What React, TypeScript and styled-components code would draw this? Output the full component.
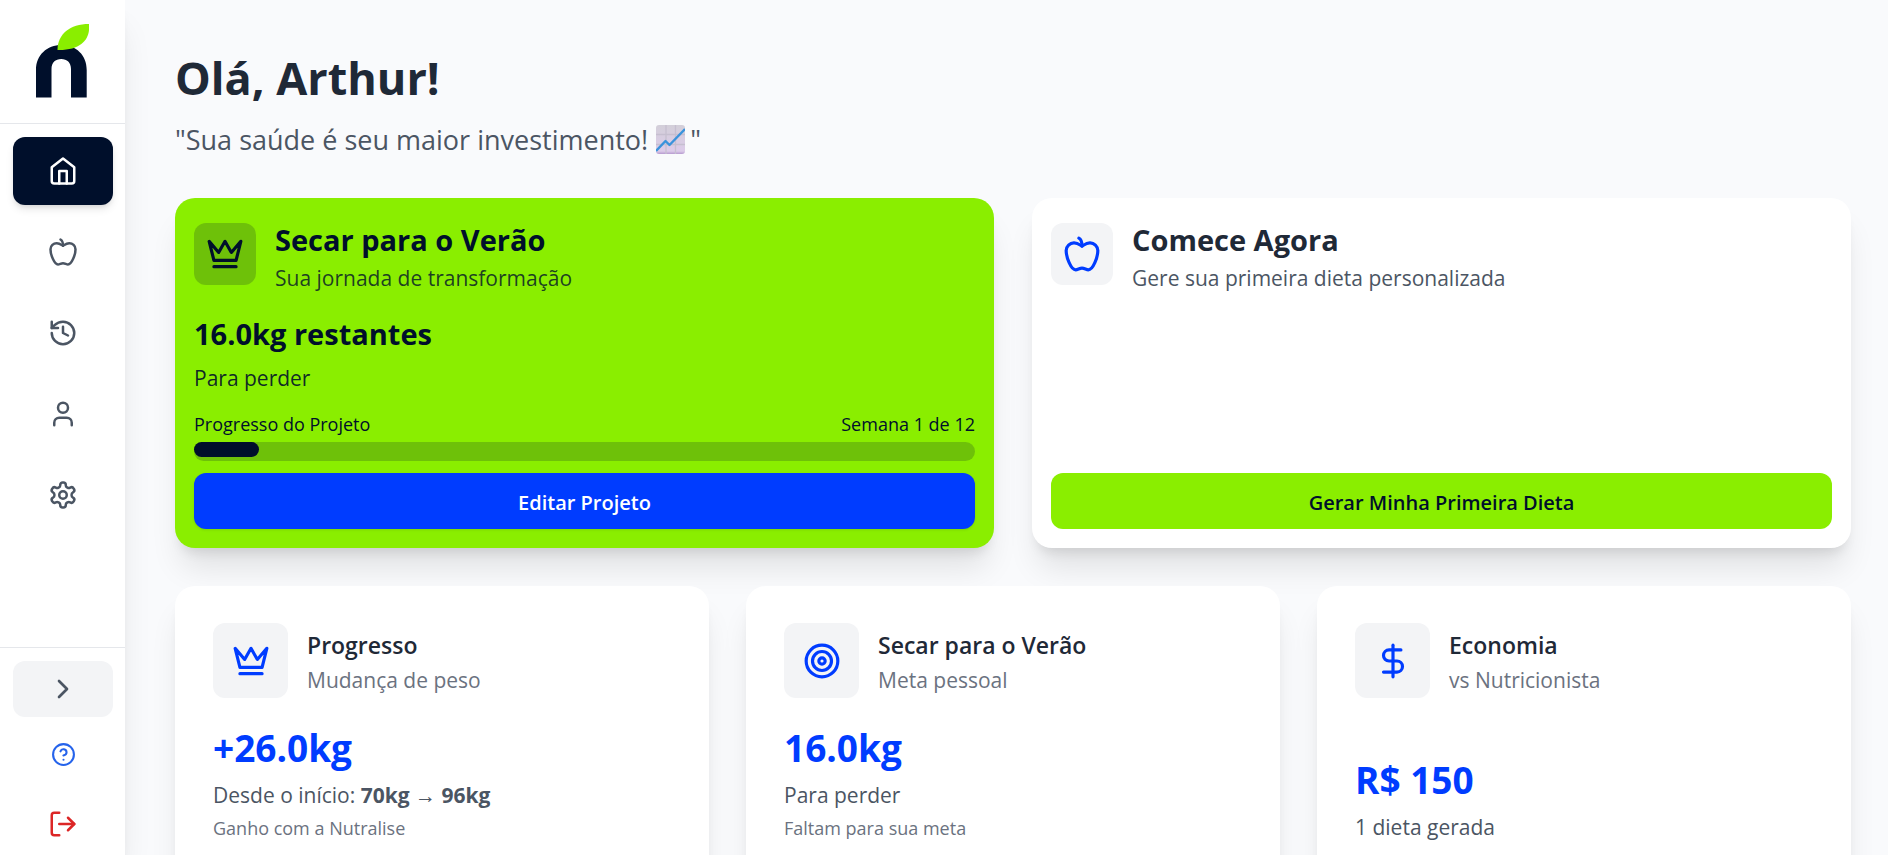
import React from "react";
import styled, { createGlobalStyle } from "styled-components";
import {
  ChevronRight,
  CircleQuestionMark,
  DollarSign,
  History,
  LogOut,
  Target,
  User,
} from "lucide-react";

const color = {
  navy: "#000f2b",
  lime: "#8aee00",
  blue: "#003cff",
  page: "#f9fafc",
  ink: "#1f2937",
  text: "#4b5563",
  muted: "#6b7280",
  tile: "#f3f4f6",
  line: "#e5e7eb",
};

const GlobalStyle = createGlobalStyle`
  *, *::before, *::after { box-sizing: border-box; }
  body {
    margin: 0;
    background: ${color.page};
    color: ${color.ink};
    font-family: "Segoe UI", "Open Sans", "Noto Sans", sans-serif;
  }
  h1, h2, h3, p { margin: 0; }
  button { font: inherit; border: 0; cursor: pointer; }
`;

const Shell = styled.div`
  display: flex;
  height: 100vh;
  overflow: hidden;
`;

const Sidebar = styled.aside`
  display: flex;
  flex-direction: column;
  flex: 0 0 125px;
  background: #fff;
  box-shadow: 0 25px 31px -6px rgba(0, 0, 0, 0.1), 0 10px 12px -6px rgba(0, 0, 0, 0.1);
  z-index: 1;
`;

const Brand = styled.a`
  display: flex;
  justify-content: center;
  padding: 24px 0 25px;
  border-bottom: 1px solid ${color.line};
`;

const Nav = styled.nav`
  display: flex;
  flex-direction: column;
  gap: 13px;
  padding: 13px 12px 13px 13px;
`;

const NavLink = styled.a<{ $active?: boolean }>`
  display: flex;
  align-items: center;
  justify-content: center;
  height: 68px;
  border-radius: 12px;
  color: ${(p) => (p.$active ? "#fff" : color.text)};
  background: ${(p) => (p.$active ? color.navy : "transparent")};
  box-shadow: ${(p) => (p.$active ? "0 5px 8px -1px rgba(0, 0, 0, 0.1), 0 3px 5px -2px rgba(0, 0, 0, 0.1)" : "none")};
`;

const SidebarFooter = styled.div`
  display: flex;
  flex-direction: column;
  gap: 10px;
  margin-top: auto;
  padding: 13px 12px 0 13px;
  border-top: 1px solid ${color.line};
`;

const FooterButton = styled.button<{ $tone: string; $filled?: boolean; $height: number }>`
  display: flex;
  align-items: center;
  justify-content: center;
  height: ${(p) => p.$height}px;
  padding: 0;
  border-radius: 12px;
  color: ${(p) => p.$tone};
  background: ${(p) => (p.$filled ? color.tile : "transparent")};
`;

const Main = styled.main`
  flex: 1;
  min-width: 0;
  padding: 50px 37px 38px 50px;
  overflow-y: auto;
  scrollbar-width: none;
`;

const Greeting = styled.h1`
  font-size: 45px;
  line-height: 56px;
  font-weight: 700;
`;

const Quote = styled.p`
  display: flex;
  align-items: center;
  margin: 13px 0 38px;
  font-size: 27px;
  line-height: 41px;
  color: ${color.text};

  svg {
    margin: 0 5px 0 8px;
  }
`;

const Grid = styled.div<{ $columns: number; $gap: number }>`
  display: grid;
  grid-template-columns: repeat(${(p) => p.$columns}, minmax(0, 1fr));
  gap: ${(p) => p.$gap}px;
  margin-bottom: 38px;
`;

const Card = styled.section<{ $accent?: boolean }>`
  display: flex;
  flex-direction: column;
  border-radius: 20px;
  background: ${(p) => (p.$accent ? color.lime : "#fff")};
  box-shadow: 0 25px 31px -6px rgba(0, 0, 0, 0.1), 0 10px 12px -6px rgba(0, 0, 0, 0.1);
`;

const FeatureCard = styled(Card)`
  min-height: 350px;
  padding: 25px 19px 19px;
  color: ${(p) => (p.$accent ? color.navy : color.ink)};
`;

const StatCard = styled(Card)`
  padding: 37px 38px;
`;

const CardHeader = styled.header<{ $align: string }>`
  display: flex;
  align-items: ${(p) => p.$align};
  gap: 19px;
`;

const IconTile = styled.div<{ $size: number; $accent?: boolean }>`
  display: flex;
  align-items: center;
  justify-content: center;
  flex: none;
  width: ${(p) => p.$size}px;
  height: ${(p) => p.$size}px;
  border-radius: 12px;
  color: ${(p) => (p.$accent ? color.navy : color.blue)};
  background: ${(p) => (p.$accent ? "rgba(0, 15, 43, 0.2)" : color.tile)};
`;

const FeatureTitle = styled.h2`
  font-size: 29px;
  line-height: 34px;
  font-weight: 700;
`;

const FeatureSubtitle = styled.p<{ $accent?: boolean }>`
  margin-top: 7px;
  font-size: 21px;
  line-height: 28px;
  color: ${(p) => (p.$accent ? "rgba(0, 15, 43, 0.8)" : color.text)};
`;

const Remaining = styled.p`
  margin-top: 23px;
  font-size: 29px;
  line-height: 38px;
  font-weight: 700;
`;

const RemainingNote = styled.p`
  margin-top: 11px;
  font-size: 21px;
  line-height: 28px;
  color: rgba(0, 15, 43, 0.9);
`;

const ProgressLabels = styled.div`
  display: flex;
  justify-content: space-between;
  margin-top: auto;
  font-size: 18px;
  line-height: 24px;
`;

const ProgressTrack = styled.div`
  height: 19px;
  margin: 6px 0 12px;
  border-radius: 10px;
  background: rgba(0, 15, 43, 0.2);
`;

const ProgressFill = styled.div`
  height: 15px;
  border-radius: 8px;
  background: ${color.navy};
`;

const ActionButton = styled.button<{ $tone: "blue" | "lime" }>`
  height: 56px;
  padding: 3px 20px 0;
  border-radius: 12px;
  font-size: 20px;
  line-height: 28px;
  font-weight: 600;
  color: ${(p) => (p.$tone === "blue" ? "#fff" : color.navy)};
  background: ${(p) => (p.$tone === "blue" ? color.blue : color.lime)};
  box-shadow: ${(p) => (p.$tone === "blue" ? "0 1px 3px rgba(0, 0, 0, 0.1)" : "none")};
`;

const CardBottom = styled.div`
  display: flex;
  flex-direction: column;
  margin-top: auto;
`;

const StatHeading = styled.div`
  padding-top: 4px;
`;

const StatTitle = styled.h3`
  font-size: 23px;
  line-height: 35px;
  font-weight: 600;
`;

const StatSubtitle = styled.p`
  font-size: 21px;
  line-height: 35px;
  color: ${color.muted};
`;

const StatBody = styled.div`
  display: flex;
  flex: 1;
  flex-direction: column;
  justify-content: flex-end;
  padding-top: 27px;
`;

const StatValue = styled.p`
  font-size: 37px;
  line-height: 46px;
  font-weight: 700;
  color: ${color.blue};
`;

const StatText = styled.p`
  margin-top: 10px;
  font-size: 21px;
  line-height: 28px;
  color: ${color.text};
`;

const StatNote = styled.p`
  margin-top: 7px;
  font-size: 18px;
  line-height: 25px;
  color: ${color.muted};
`;

const Logo = () => (
  <svg width="54" height="74" viewBox="0 0 54 74" aria-hidden="true">
    <path
      fill={color.navy}
      d="M0 73.500V46C0 31 11 21 25.500 21S50.700 31 50.700 46v27.500H35V45c0-6.500-4-10-9.800-10s-9.700 3.500-9.700 10v28.500Z"
    />
    <path fill={color.lime} d="M53 0v6C52 17 43 26.500 21.500 26 21.500 10 34 0 53 0Z" />
  </svg>
);

const Icon = ({ size, children }: { size: number; children: React.ReactNode }) => (
  <svg
    width={size}
    height={size}
    viewBox="0 0 24 24"
    fill="none"
    stroke="currentColor"
    strokeWidth="2"
    strokeLinecap="round"
    strokeLinejoin="round"
    aria-hidden="true"
  >
    {children}
  </svg>
);

const HomeIcon = () => (
  <Icon size={30}>
    <path d="m3 9 9-7 9 7v11a2 2 0 0 1-2 2H5a2 2 0 0 1-2-2z" />
    <path d="M9 22V12h6v10" />
  </Icon>
);

const AppleIcon = ({ size }: { size: number }) => (
  <Icon size={size}>
    <path d="M12 20.94c1.5 0 2.75 1.06 4 1.06 3 0 6-8 6-12.22A4.91 4.91 0 0 0 17 5c-2.22 0-4 1.44-5 2-1-.56-2.780-2-5-2a4.900 4.900 0 0 0-5 4.780C2 14 5 22 8 22c1.250 0 2.500-1.060 4-1.060Z" />
    <path d="M10 2c1 .5 2 2 2 5" />
  </Icon>
);

const SettingsIcon = () => (
  <Icon size={30}>
    <path d="M12.22 2h-.44a2 2 0 0 0-2 2v.18a2 2 0 0 1-1 1.73l-.43.25a2 2 0 0 1-2 0l-.15-.08a2 2 0 0 0-2.73.73l-.22.38a2 2 0 0 0 .73 2.73l.15.1a2 2 0 0 1 1 1.72v.51a2 2 0 0 1-1 1.74l-.15.09a2 2 0 0 0-.73 2.73l.22.38a2 2 0 0 0 2.73.73l.15-.08a2 2 0 0 1 2 0l.43.25a2 2 0 0 1 1 1.73V20a2 2 0 0 0 2 2h.44a2 2 0 0 0 2-2v-.18a2 2 0 0 1 1-1.73l.43-.25a2 2 0 0 1 2 0l.15.08a2 2 0 0 0 2.73-.73l.22-.39a2 2 0 0 0-.73-2.73l-.15-.08a2 2 0 0 1-1-1.74v-.5a2 2 0 0 1 1-1.74l.15-.09a2 2 0 0 0 .73-2.73l-.22-.38a2 2 0 0 0-2.73-.73l-.15.08a2 2 0 0 1-2 0l-.43-.25a2 2 0 0 1-1-1.73V4a2 2 0 0 0-2-2z" />
    <circle cx="12" cy="12" r="3" />
  </Icon>
);

const CrownIcon = () => (
  <Icon size={38}>
    <path d="m2 4 3 12h14l3-12-6 7-4-7-4 7-6-7zm3 16h14" />
  </Icon>
);

const ChartEmoji = () => (
  <svg width="29" height="29" viewBox="0 0 29 29" role="img" aria-label="gráfico em alta">
    <defs>
      <linearGradient id="paper" x1="0" y1="0" x2="0" y2="1">
        <stop offset="0" stopColor="#d3cfd9" />
        <stop offset="0.9" stopColor="#dccbe9" />
        <stop offset="1" stopColor="#b79bd0" />
      </linearGradient>
    </defs>
    <rect width="29" height="29" rx="3" fill="url(#paper)" />
    <path d="M0 9.500h29M0 19.500h29M10 0v29M19.500 0v29" stroke="#c6bfd0" strokeWidth="1.3" />
    <path d="m0 26 9.500-10 4 4L29 4" fill="none" stroke="#3a93dc" strokeWidth="2.4" strokeLinejoin="round" />
  </svg>
);

type StatProps = {
  icon: React.ReactNode;
  title: string;
  subtitle: string;
  value: string;
  text: React.ReactNode;
  note?: string;
};

const Stat = ({ icon, title, subtitle, value, text, note }: StatProps) => (
  <StatCard>
    <CardHeader $align="center">
      <IconTile $size={75}>{icon}</IconTile>
      <StatHeading>
        <StatTitle>{title}</StatTitle>
        <StatSubtitle>{subtitle}</StatSubtitle>
      </StatHeading>
    </CardHeader>
    <StatBody>
      <StatValue>{value}</StatValue>
      <StatText>{text}</StatText>
      {note && <StatNote>{note}</StatNote>}
    </StatBody>
  </StatCard>
);

const week = 1;
const totalWeeks = 12;

export default function App() {
  return (
    <>
      <GlobalStyle />
      <Shell>
        <Sidebar>
          <Brand href="#" aria-label="Nutralise">
            <Logo />
          </Brand>
          <Nav aria-label="Principal">
            <NavLink href="#" $active aria-label="Início"><HomeIcon /></NavLink>
            <NavLink href="#" aria-label="Dietas"><AppleIcon size={30} /></NavLink>
            <NavLink href="#" aria-label="Histórico"><History size={30} /></NavLink>
            <NavLink href="#" aria-label="Perfil"><User size={30} /></NavLink>
            <NavLink href="#" aria-label="Configurações"><SettingsIcon /></NavLink>
          </Nav>
          <SidebarFooter>
            <FooterButton $tone={color.text} $filled $height={56} aria-label="Expandir"><ChevronRight size={32} /></FooterButton>
            <FooterButton $tone="#2563eb" $height={55} aria-label="Ajuda"><CircleQuestionMark size={25} /></FooterButton>
            <FooterButton $tone="#dc2626" $height={63} aria-label="Sair"><LogOut size={30} /></FooterButton>
          </SidebarFooter>
        </Sidebar>

        <Main>
          <Greeting>Olá, Arthur!</Greeting>
          <Quote>
            "Sua saúde é seu maior investimento!
            <ChartEmoji />"
          </Quote>

          <Grid $columns={2} $gap={38}>
            <FeatureCard $accent>
              <CardHeader $align="flex-start">
                <IconTile $size={62} $accent><CrownIcon /></IconTile>
                <div>
                  <FeatureTitle>Secar para o Verão</FeatureTitle>
                  <FeatureSubtitle $accent>Sua jornada de transformação</FeatureSubtitle>
                </div>
              </CardHeader>
              <Remaining>16.0kg restantes</Remaining>
              <RemainingNote>Para perder</RemainingNote>
              <CardBottom>
                <ProgressLabels>
                  <span>Progresso do Projeto</span>
                  <span>Semana {week} de {totalWeeks}</span>
                </ProgressLabels>
                <ProgressTrack role="progressbar" aria-valuenow={week} aria-valuemin={0} aria-valuemax={totalWeeks} aria-label="Progresso do Projeto">
                  <ProgressFill style={{ width: `${(week / totalWeeks) * 100}%` }} />
                </ProgressTrack>
                <ActionButton $tone="blue">Editar Projeto</ActionButton>
              </CardBottom>
            </FeatureCard>

            <FeatureCard>
              <CardHeader $align="flex-start">
                <IconTile $size={62}><AppleIcon size={38} /></IconTile>
                <div>
                  <FeatureTitle>Comece Agora</FeatureTitle>
                  <FeatureSubtitle>Gere sua primeira dieta personalizada</FeatureSubtitle>
                </div>
              </CardHeader>
              <CardBottom>
                <ActionButton $tone="lime">Gerar Minha Primeira Dieta</ActionButton>
              </CardBottom>
            </FeatureCard>
          </Grid>

          <Grid $columns={3} $gap={37}>
            <Stat
              icon={<CrownIcon />}
              title="Progresso"
              subtitle="Mudança de peso"
              value="+26.0kg"
              text={<>Desde o início: <strong>70kg → 96kg</strong></>}
              note="Ganho com a Nutralise"
            />
            <Stat
              icon={<Target size={38} />}
              title="Secar para o Verão"
              subtitle="Meta pessoal"
              value="16.0kg"
              text="Para perder"
              note="Faltam para sua meta"
            />
            <Stat
              icon={<DollarSign size={38} />}
              title="Economia"
              subtitle="vs Nutricionista"
              value="R$ 150"
              text="1 dieta gerada"
            />
          </Grid>
        </Main>
      </Shell>
    </>
  );
}
